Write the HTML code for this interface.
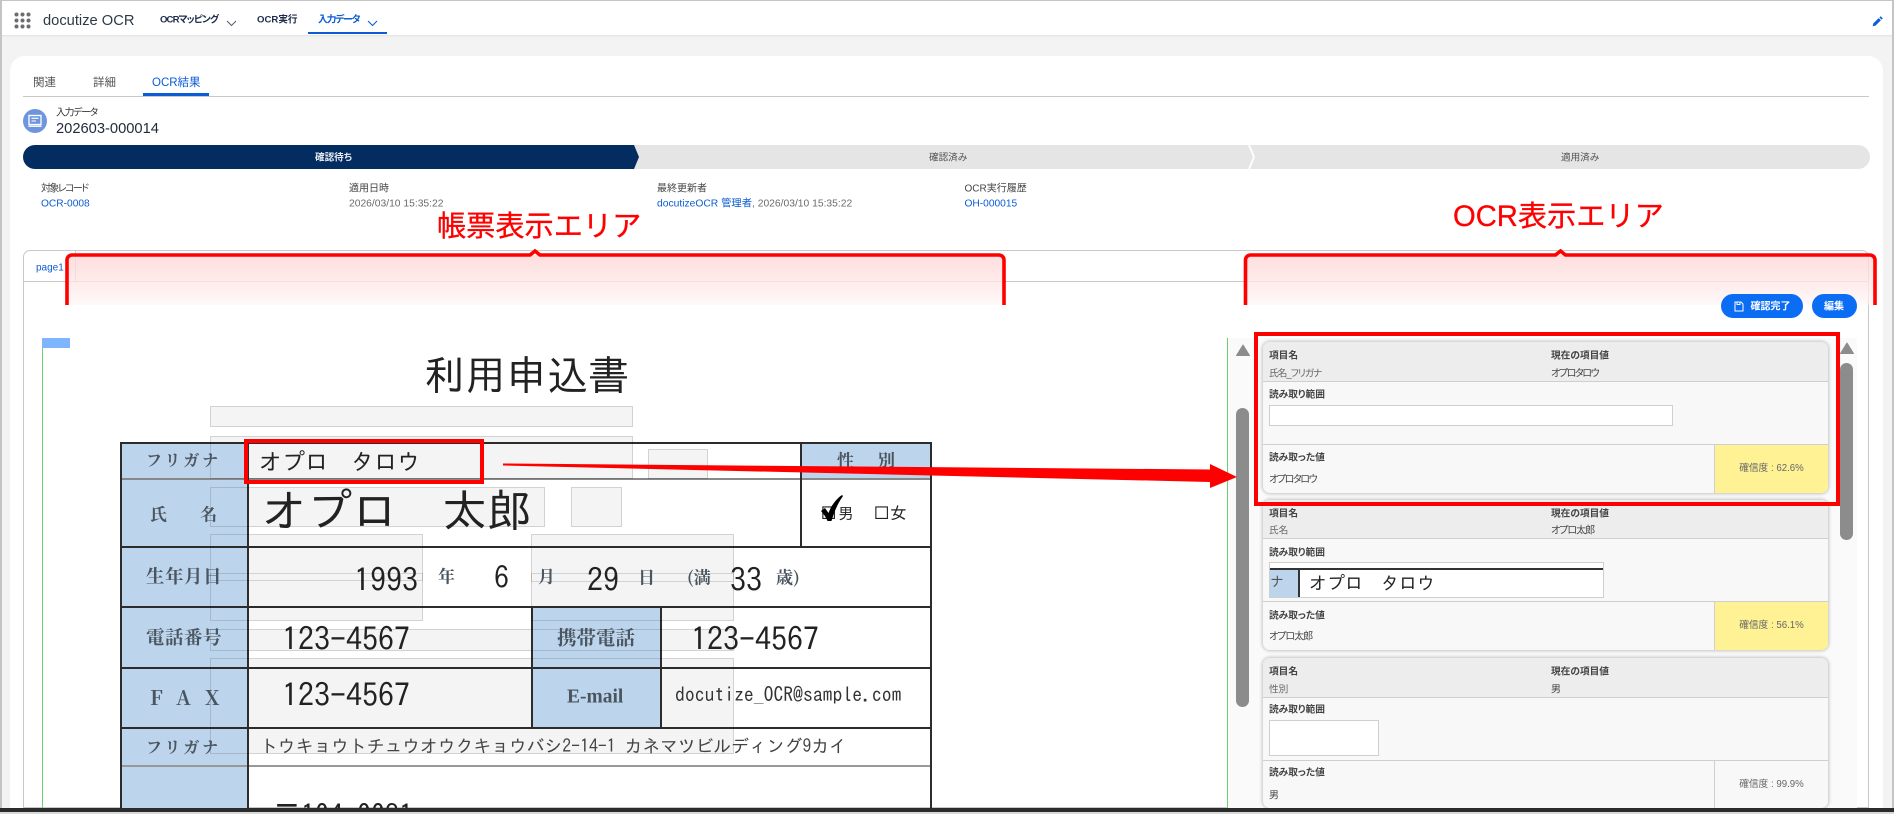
<!DOCTYPE html>
<html lang="ja"><head><meta charset="utf-8"><title>docutize OCR</title>
<style>
*{box-sizing:border-box}
html{margin:0;padding:0;width:1894px;height:814px;overflow:hidden}
body{margin:0;padding:0;width:1894px;height:814px;overflow:hidden;position:relative;background:#f3f3f3;font-family:"Liberation Sans","Noto Sans CJK JP",sans-serif;color:#3e3e3c;font-feature-settings:"palt"}
.a{position:absolute;white-space:nowrap}
.t{position:absolute;white-space:nowrap;line-height:1;transform:translateY(calc(-50% + 1.5px))}
.b{font-weight:700}
.lnk{color:#0b5cd5}
.s10{font-size:10.2px}
.fld{font-size:10px;color:#444}
.val{font-size:10.3px;color:#6b6b6b}
.doc{font-family:"IPAGothic","Noto Sans CJK JP",sans-serif;color:#222;font-feature-settings:normal}
.t.doc{transform:translateY(calc(-50% + .5px))}
.lab{font-family:"Noto Serif CJK SC","Liberation Serif",serif;font-weight:700;color:#4a5560;font-feature-settings:normal}
.t.lab{transform:translateY(-50%)}
.ln{position:absolute;background:#2c2c2c}
.bl{position:absolute;background:#bdd5ec}
.of{position:absolute;background:#f4f4f4}
.ob{position:absolute;border:1px solid #dcdcdc;mix-blend-mode:multiply}
.card{position:absolute;left:1263px;width:565px;background:#f8f8f8;border-radius:7px;box-shadow:0 0 3px 1px rgba(0,0,0,.22);overflow:hidden}
.hd{position:absolute;left:0;top:0;width:565px;background:#ededed;border-bottom:1px solid #cfcfcf}
.c{position:absolute;white-space:nowrap;line-height:1;transform:translateY(calc(-50% + 1.5px));font-size:10px;color:#444}
.c.k{font-weight:700;color:#444;font-size:9.7px}
.c.v{color:#666;font-size:9.7px}
.sep{position:absolute;left:0;width:565px;height:1px;background:#cfcfcf}
.conf{position:absolute;left:451px;width:114px;border-left:1px solid #cfcfcf;text-align:center;font-size:9.7px;color:#666}
.red{color:#f00;font-size:29.2px;-webkit-text-stroke:.3px #f00;font-feature-settings:normal}
</style></head><body>

<!-- top bar -->
<div class="a" style="left:0;top:0;width:1894px;height:35px;background:#fff;border-top:1px solid #c4c4c4;box-shadow:0 1px 2px rgba(0,0,0,.08)"></div>
<svg class="a" style="left:14px;top:12px" width="17" height="17" viewBox="0 0 17 17" fill="#6b6d70"><circle cx="2.5" cy="2.5" r="2"/><circle cx="8.5" cy="2.5" r="2"/><circle cx="14.5" cy="2.5" r="2"/><circle cx="2.5" cy="8.5" r="2"/><circle cx="8.5" cy="8.5" r="2"/><circle cx="14.5" cy="8.5" r="2"/><circle cx="2.5" cy="14.5" r="2"/><circle cx="8.5" cy="14.5" r="2"/><circle cx="14.5" cy="14.5" r="2"/></svg>
<div class="t" style="left:43px;top:20px;font-size:14.7px;color:#2e3a48">docutize OCR</div>
<div class="t b" style="left:160px;top:19px;font-size:9.6px;color:#1d2b4a;letter-spacing:-.9px">OCRマッピング</div>
<svg class="a" style="left:226px;top:20px" width="11" height="7" viewBox="0 0 11 7" fill="none" stroke="#5a6270" stroke-width="1.1"><path d="M1 1l4.5 4.5L10 1"/></svg>
<div class="t b" style="left:257px;top:19px;font-size:9.6px;color:#1d2b4a">OCR実行</div>
<div class="t b" style="left:318px;top:19px;font-size:9.8px;color:#0b5cd5;letter-spacing:-1.2px">入力データ</div>
<svg class="a" style="left:367px;top:20px" width="11" height="7" viewBox="0 0 11 7" fill="none" stroke="#0b5cd5" stroke-width="1.1"><path d="M1 1l4.5 4.5L10 1"/></svg>
<div class="a" style="left:308px;top:32px;width:79px;height:2px;background:#0b5cd5"></div>
<svg class="a" style="left:1872px;top:15px" width="12" height="12" viewBox="0 0 12 12" fill="#0b5cd5"><path d="M8.6 1.2l2.2 2.2-1.2 1.2-2.2-2.2zM6.7 3.1l2.2 2.2-5.4 5.3-2.9.7.7-2.9z"/></svg>

<!-- main card -->
<div class="a" style="left:10px;top:56px;width:1873px;height:752px;background:#fff;border-radius:15px 15px 0 0"></div>

<div class="t" style="left:33px;top:82px;font-size:11.5px;color:#555">関連</div>
<div class="t" style="left:93px;top:82px;font-size:11.5px;color:#555">詳細</div>
<div class="t" style="left:152px;top:82px;font-size:11.5px;color:#0b5cd5">OCR結果</div>
<div class="a" style="left:23px;top:96px;width:1846px;height:1px;background:#c9c9c9"></div>
<div class="a" style="left:143px;top:93px;width:66px;height:3px;background:#0b5cd5"></div>

<svg class="a" style="left:23px;top:109px" width="24" height="24" viewBox="0 0 24 24"><circle cx="12" cy="12" r="12" fill="#6f96dd"/><rect x="6" y="6.5" width="12" height="9" fill="none" stroke="#fff" stroke-width="1.3"/><path d="M8.5 9.3h7M8.5 12h4.5" stroke="#fff" stroke-width="1.1"/><path d="M5.5 17.2h13" stroke="#fff" stroke-width="1.4"/></svg>
<div class="t" style="left:56px;top:112px;font-size:9.8px;color:#333;letter-spacing:-1.2px">入力データ</div>
<div class="t" style="left:56px;top:128px;font-size:14.7px;color:#1f2a3a">202603-000014</div>

<!-- path -->
<svg class="a" style="left:23px;top:145px" width="1847" height="24" viewBox="0 0 1847 24">
<path d="M12 0H612l5 12-5 12H12A12 12 0 0 1 12 0z" fill="#032d60"/>
<path d="M611 0H1225l5 12-5 12H611l5-12z" fill="#e5e5e5"/>
<path d="M1227 0H1835A12 12 0 0 1 1835 24H1227l5-12z" fill="#e5e5e5"/>
</svg>
<div class="t b" style="left:315px;top:157px;font-size:9.6px;color:#e8edf4">確認待ち</div>
<div class="t" style="left:929px;top:157px;font-size:9.6px;color:#555">確認済み</div>
<div class="t" style="left:1561px;top:157px;font-size:9.6px;color:#555">適用済み</div>

<!-- fields -->
<div class="t fld" style="left:41px;top:188px;letter-spacing:-1.6px">対象レコード</div>
<div class="t s10 lnk" style="left:41px;top:203px">OCR-0008</div>
<div class="t fld" style="left:349px;top:188px">適用日時</div>
<div class="t val" style="left:349px;top:203px">2026/03/10 15:35:22</div>
<div class="t fld" style="left:657px;top:188px">最終更新者</div>
<div class="t val" style="left:657px;top:203px"><span class="lnk">docutizeOCR 管理者</span>, 2026/03/10 15:35:22</div>
<div class="t fld" style="left:964.5px;top:188px">OCR実行履歴</div>
<div class="t s10 lnk" style="left:964.5px;top:203px">OH-000015</div>

<!-- tab box -->
<div class="a" style="left:23px;top:250px;width:1846px;height:558px;border:1px solid #c9c9c9;border-radius:7px 7px 0 0"></div>
<div class="a" style="left:23px;top:281px;width:1846px;height:1px;background:#c9c9c9"></div>
<div class="a" style="left:75px;top:250px;width:1px;height:32px;background:#c9c9c9"></div>
<div class="t" style="left:36px;top:267px;font-size:10px;color:#0b5cd5">page1</div>

<!-- pink areas -->
<div class="a" style="left:66px;top:255px;width:938px;height:50px;background:linear-gradient(#ffd6d6,rgba(255,240,240,.9) 85%,rgba(255,245,245,.7));opacity:.82"></div>
<div class="a" style="left:1245px;top:255px;width:631px;height:50px;background:linear-gradient(#ffd6d6,rgba(255,240,240,.9) 85%,rgba(255,245,245,.7));opacity:.82"></div>
<svg class="a" style="left:0;top:245px" width="1894" height="62" viewBox="0 0 1894 62" fill="none" stroke="#f00" stroke-width="3.6">
<path d="M67 60V15a5 5 0 0 1 5-5H530l5-4 5 4H999a5 5 0 0 1 5 5V60"/>
<path d="M1245.5 60V15a5 5 0 0 1 5-5H1555.5l5-4 5 4H1870a5 5 0 0 1 5 5V60"/>
</svg>
<div class="t red" style="left:437px;top:226px">帳票表示エリア</div>
<div class="t red" style="left:1453px;top:216px">OCR表示エリア</div>

<!-- buttons -->
<div class="a" style="left:1721px;top:294px;width:82px;height:24px;border-radius:12px;background:#0b6cf4"></div>
<svg class="a" style="left:1734px;top:301px" width="10" height="11" viewBox="0 0 10 11" fill="none" stroke="#fff" stroke-width="1"><path d="M1 1h6l2 2v7H1zM3 1v2.5h3V1"/></svg>
<div class="t b" style="left:1750.500px;top:306px;font-size:10px;color:#fff;font-feature-settings:normal">確認完了</div>
<div class="a" style="left:1812px;top:294px;width:45px;height:24px;border-radius:12px;background:#0b6cf4"></div>
<div class="t b" style="left:1824px;top:306px;font-size:10px;color:#fff;font-feature-settings:normal">編集</div>

<!-- document area -->
<div class="a" style="left:42px;top:338px;width:1px;height:470px;background:#6fcf6f"></div>
<div class="a" style="left:42px;top:338px;width:28px;height:10px;background:#7fb5ff"></div>
<div class="t doc" style="left:424px;top:374px;font-size:41px">利用申込書</div>

<!-- overlay fills (beneath cells) -->
<div class="of" style="left:209.5px;top:406px;width:423px;height:21px"></div>
<div class="of" style="left:209.5px;top:436px;width:423px;height:43px"></div>
<div class="of" style="left:648px;top:449px;width:60px;height:30px"></div>
<div class="of" style="left:209.5px;top:487px;width:335px;height:40px"></div>
<div class="of" style="left:571px;top:487px;width:50.5px;height:40px"></div>
<div class="of" style="left:209.5px;top:534px;width:213px;height:47px"></div>
<div class="of" style="left:209.5px;top:573px;width:213px;height:48px"></div>
<div class="of" style="left:530.5px;top:534px;width:203px;height:47.5px"></div>
<div class="of" style="left:530.5px;top:573px;width:203px;height:47.5px"></div>
<div class="of" style="left:209.5px;top:628.5px;width:524px;height:22px"></div>
<div class="of" style="left:209.5px;top:658px;width:524px;height:96px"></div>

<!-- table backgrounds -->
<div class="bl" style="left:120px;top:442px;width:128px;height:366px"></div>
<div class="bl" style="left:801px;top:442px;width:130px;height:37px"></div>
<div class="bl" style="left:531px;top:607px;width:130px;height:121px"></div>
<!-- table lines -->
<div class="ln" style="left:120px;top:442px;width:811px;height:2px"></div>
<div class="ln" style="left:120px;top:478px;width:811px;height:2px;background:#888"></div>
<div class="ln" style="left:120px;top:546px;width:811px;height:2px"></div>
<div class="ln" style="left:120px;top:606px;width:811px;height:2px"></div>
<div class="ln" style="left:120px;top:667px;width:811px;height:2px"></div>
<div class="ln" style="left:120px;top:727px;width:811px;height:2px"></div>
<div class="ln" style="left:120px;top:765px;width:811px;height:2px;background:#999"></div>
<div class="ln" style="left:120px;top:442px;width:2px;height:366px"></div>
<div class="ln" style="left:247px;top:442px;width:2px;height:366px"></div>
<div class="ln" style="left:930px;top:442px;width:2px;height:366px"></div>
<div class="ln" style="left:800px;top:442px;width:2px;height:105px"></div>
<div class="ln" style="left:531px;top:607px;width:2px;height:121px"></div>
<div class="ln" style="left:660px;top:607px;width:2px;height:121px"></div>

<!-- overlay borders -->
<div class="ob" style="left:209.5px;top:406px;width:423px;height:21px"></div>
<div class="ob" style="left:209.5px;top:436px;width:423px;height:43px"></div>
<div class="ob" style="left:648px;top:449px;width:60px;height:30px"></div>
<div class="ob" style="left:209.5px;top:487px;width:335px;height:40px"></div>
<div class="ob" style="left:571px;top:487px;width:50.5px;height:40px"></div>
<div class="ob" style="left:209.5px;top:534px;width:213px;height:47px"></div>
<div class="ob" style="left:209.5px;top:573px;width:213px;height:48px"></div>
<div class="ob" style="left:530.5px;top:534px;width:203px;height:47.5px"></div>
<div class="ob" style="left:530.5px;top:573px;width:203px;height:47.5px"></div>
<div class="ob" style="left:209.5px;top:628.5px;width:524px;height:22px"></div>
<div class="ob" style="left:209.5px;top:658px;width:524px;height:96px"></div>

<!-- labels -->
<div class="t lab" style="left:146px;top:460px;font-size:16px;letter-spacing:3px">フリガナ</div>
<div class="t lab" style="left:150px;top:513px;font-size:17px">氏</div>
<div class="t lab" style="left:200px;top:513px;font-size:17px">名</div>
<div class="t lab" style="left:146px;top:576px;font-size:18.5px;letter-spacing:.5px">生年月日</div>
<div class="t lab" style="left:146px;top:637px;font-size:18.5px;letter-spacing:.5px">電話番号</div>
<div class="t lab" style="left:150px;top:697px;font-size:20px">F</div>
<div class="t lab" style="left:176px;top:697px;font-size:20px">A</div>
<div class="t lab" style="left:205px;top:697px;font-size:20px">X</div>
<div class="t lab" style="left:146px;top:747px;font-size:16px;letter-spacing:3px">フリガナ</div>
<div class="t lab" style="left:837px;top:459px;font-size:17px">性</div>
<div class="t lab" style="left:878px;top:459px;font-size:17px">別</div>
<div class="t lab" style="left:557px;top:637px;font-size:19.5px">携帯電話</div>
<div class="t lab" style="left:567px;top:697px;font-size:19.5px;font-family:'Liberation Serif',serif">E-mail</div>
<div class="t lab" style="left:438px;top:575px;font-size:17px">年</div>
<div class="t lab" style="left:538px;top:575px;font-size:17px">月</div>
<div class="t lab" style="left:638px;top:576px;font-size:17px">日</div>
<div class="t lab" style="left:687px;top:576px;font-size:17px">(満</div>
<div class="t lab" style="left:776px;top:576px;font-size:17px">歳)</div>

<!-- filled values -->
<div class="t doc" style="left:259px;top:461px;font-size:23px">オプロ　タロウ</div>
<div class="t doc" style="left:262px;top:510px;font-size:45px">オプロ　太郎</div>
<div class="t doc" style="left:354px;top:579px;font-size:32px">1993</div>
<div class="t doc" style="left:494px;top:577px;font-size:30px">6</div>
<div class="t doc" style="left:587px;top:579px;font-size:32px">29</div>
<div class="t doc" style="left:730px;top:579px;font-size:32px">33</div>
<div class="t doc" style="left:282px;top:638px;font-size:32px">123-4567</div>
<div class="t doc" style="left:282px;top:694px;font-size:32px">123-4567</div>
<div class="t doc" style="left:691px;top:638px;font-size:32px">123-4567</div>
<div class="t doc" style="left:675px;top:695px;font-size:19.7px;color:#333">docutize_OCR@sample.com</div>
<div class="t doc" style="left:260px;top:747px;font-size:17.8px;color:#444">トウキョウトチュウオウクキョウバシ2-14-1 カネマツビルディング9カイ</div>
<div class="t doc" style="left:838px;top:513px;font-size:15.5px">男</div>
<div class="t doc" style="left:873px;top:513px;font-size:17px">□女</div>
<div class="t doc" style="left:820px;top:513px;font-size:17px">□</div>
<svg class="a" style="left:820px;top:494px" width="24" height="28" viewBox="0 0 24 28"><path d="M1 17l4-3 3.500 5C11 12 16 5 22 1l1 1C18 9 14 18 11.500 27H7.500C6 23 3.500 20 1 17z" fill="#000"/></svg>
<div style="position:absolute;left:0;top:790px;width:1000px;height:18px;overflow:hidden"><div class="a doc" style="left:273px;top:11px;font-size:28px;line-height:1">〒104-0031</div></div>

<!-- OCR panel -->
<div class="a" style="left:1227px;top:338px;width:630px;height:470px;background:#fafafa;border-left:1px solid #6fcf6f"></div>
<svg class="a" style="left:1236px;top:344px" width="14" height="12" viewBox="0 0 14 12"><path d="M7 1l6.500 10.500H.5z" fill="#8c8c8c" stroke="#8c8c8c" stroke-linejoin="round"/></svg>
<div class="a" style="left:1236px;top:408px;width:13px;height:299px;border-radius:7px;background:#8c8c8c"></div>
<svg class="a" style="left:1840px;top:342px" width="14" height="12" viewBox="0 0 14 12"><path d="M7 1l6.500 10.500H.5z" fill="#8c8c8c" stroke="#8c8c8c" stroke-linejoin="round"/></svg>
<div class="a" style="left:1839.5px;top:363px;width:13px;height:177px;border-radius:7px;background:#8c8c8c"></div>

<!-- card 1 -->
<div class="card" style="top:342px;height:151px">
 <div class="hd" style="height:40px"></div>
 <div class="c k" style="left:6px;top:13px">項目名</div><div class="c k" style="left:288px;top:13px">現在の項目値</div>
 <div class="c v" style="left:6px;top:31px;letter-spacing:-1px">氏名_フリガナ</div><div class="c" style="left:288px;top:31px;letter-spacing:-1.4px">オプロタロウ</div>
 <div class="c k" style="left:6px;top:52px">読み取り範囲</div>
 <div class="a" style="left:6px;top:63px;width:404px;height:21px;background:#fff;border:1px solid #cfcfcf"></div>
 <div class="sep" style="top:102px"></div>
 <div class="c k" style="left:6px;top:115px">読み取った値</div>
 <div class="c" style="left:6px;top:137px;letter-spacing:-1.4px">オプロタロウ</div>
 <div class="conf" style="top:103px;height:48px;background:#fff295;line-height:48px">確信度 : 62.6%</div>
</div>
<!-- card 2 -->
<div class="card" style="top:500px;height:150px">
 <div class="hd" style="height:39px"></div>
 <div class="c k" style="left:6px;top:13px">項目名</div><div class="c k" style="left:288px;top:13px">現在の項目値</div>
 <div class="c v" style="left:6px;top:30px">氏名</div><div class="c" style="left:288px;top:30px;letter-spacing:-1px">オプロ太郎</div>
 <div class="c k" style="left:6px;top:52px">読み取り範囲</div>
 <div class="a" style="left:6px;top:62px;width:335px;height:36px;background:#fff;border:1px solid #cfcfcf;overflow:hidden">
  <div class="a" style="left:0;top:5px;width:30px;height:30px;background:#bdd5ec;border-right:2px solid #333"></div>
  <div class="a" style="left:0;top:5px;width:334px;height:2px;background:#333"></div>
  <div class="t doc" style="left:0;top:18px;font-size:14px;color:#555">ナ</div>
  <div class="t doc" style="left:39px;top:20px;font-size:18px">オプロ　タロウ</div>
 </div>
 <div class="sep" style="top:101px"></div>
 <div class="c k" style="left:6px;top:115px">読み取った値</div>
 <div class="c" style="left:6px;top:136px;letter-spacing:-1px">オプロ太郎</div>
 <div class="conf" style="top:102px;height:48px;background:#fff295;line-height:48px">確信度 : 56.1%</div>
</div>
<!-- card 3 -->
<div class="card" style="top:658px;height:150px">
 <div class="hd" style="height:40px"></div>
 <div class="c k" style="left:6px;top:13px">項目名</div><div class="c k" style="left:288px;top:13px">現在の項目値</div>
 <div class="c v" style="left:6px;top:31px">性別</div><div class="c" style="left:288px;top:31px">男</div>
 <div class="c k" style="left:6px;top:51px">読み取り範囲</div>
 <div class="a" style="left:6px;top:62px;width:110px;height:36px;background:#fff;border:1px solid #cfcfcf"></div>
 <div class="sep" style="top:102px"></div>
 <div class="c k" style="left:6px;top:114px">読み取った値</div>
 <div class="c" style="left:6px;top:137px">男</div>
 <div class="conf" style="top:103px;height:47px;line-height:47px">確信度 : 99.9%</div>
</div>

<!-- red annotations -->
<div class="a" style="left:1254px;top:332px;width:586px;height:174px;border:4px solid #f00"></div>
<div class="a" style="left:243.5px;top:439px;width:240px;height:44.5px;border:4px solid #f00"></div>
<svg class="a" style="left:0;top:0" width="1894" height="814"><polygon points="503,463.5 1210,469.5 1210,464 1237,477 1210,488 1210,482 503,465.5" fill="#f00"/></svg>

<!-- bottom bar and page frame -->
<div class="a" style="left:0;top:808px;width:1894px;height:4px;background:#2b2b2b"></div>
<div class="a" style="left:0;top:812px;width:1894px;height:2px;background:#d8d8d8"></div>
<div class="a" style="left:0;top:0;width:2px;height:808px;background:#c4c4c4"></div>
<div class="a" style="left:1892px;top:0;width:2px;height:808px;background:#c4c4c4"></div>
</body></html>
